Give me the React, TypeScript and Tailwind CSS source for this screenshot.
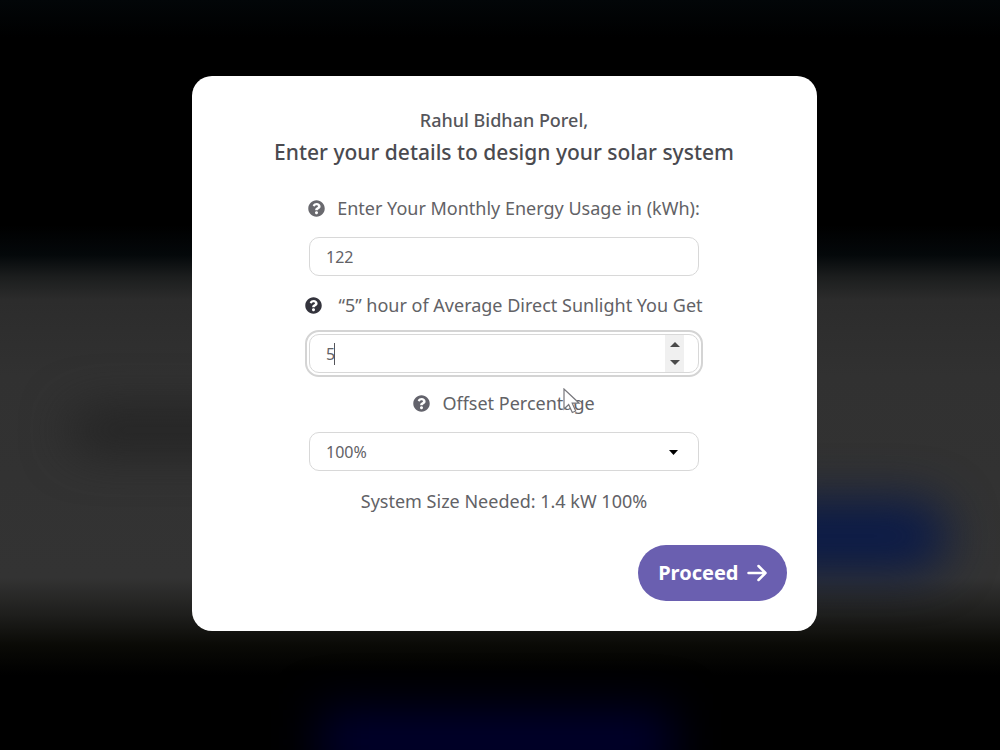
import { useState } from "react";
import type { ReactNode } from "react";
import { FaQuestionCircle } from "react-icons/fa";

function FieldLabel({ htmlFor, iconClass, children }: { htmlFor: string; iconClass: string; children: ReactNode }) {
  return (
    <label htmlFor={htmlFor} className="relative flex items-center text-lg leading-7 text-[#626266]">
      <FaQuestionCircle size={17} className={iconClass} />
      {children}
    </label>
  );
}

export default function App() {
  const [usage, setUsage] = useState("122");
  const [sunlight, setSunlight] = useState(5);
  const [offset, setOffset] = useState("100%");

  return (
    <div className="relative isolate min-h-screen overflow-hidden bg-black font-['Noto_Sans',sans-serif]">
      {/* Blurred page behind the modal */}
      <div className="absolute inset-0 -z-10 bg-[linear-gradient(to_bottom,#020608_0%,#000_5%,#000_30%,#04080a_34%,#1c1e1e_37%,#2c2c2c_40%,#313131_50%,#333_77%,#1e1e1c_82%,#0a0a06_86%,#000_90%)]">
        <div className="absolute top-[410px] left-[70px] h-10 w-60 rounded-full bg-[#222] blur-xl" />
        <div className="absolute top-[500px] left-[740px] h-18 w-52 rounded-full bg-[#0a1a48] blur-xl" />
        <div className="absolute top-[710px] left-[320px] h-16 w-88 bg-[#00002e] blur-xl" />
      </div>

      <div className="flex justify-center pt-19 pr-4 pb-8 pl-6">
        <form
          className="flex w-full max-w-[625px] flex-col items-center rounded-[20px] bg-white px-[30px] py-[30px]"
          onSubmit={(e) => e.preventDefault()}
        >
          <h2 className="text-lg leading-7 font-medium text-[#55555a]">Rahul Bidhan Porel,</h2>
          <h1 className="mb-6 text-[21px] leading-9 font-medium text-[#4a4a4f]">
            Enter your details to design your solar system
          </h1>

          <FieldLabel htmlFor="usage" iconClass="mr-3 text-[#69696e]">
            Enter Your Monthly Energy Usage in (kWh):
          </FieldLabel>
          <input
            id="usage"
            type="text"
            value={usage}
            onChange={(e) => setUsage(e.target.value)}
            className="mt-[15px] mb-[15px] h-[39px] w-full max-w-[390px] rounded-[10px] border border-[#d8d8d8] px-4 text-base text-[#626266]"
          />

          <FieldLabel htmlFor="sunlight" iconClass="mr-4 text-[#33333c]">
            “5” hour of Average Direct Sunlight You Get
          </FieldLabel>
          <div className="relative mt-[15px] mb-4 flex h-[39px] w-full max-w-[390px] rounded-[10px] border border-[#d8d8d8] pr-[14px] pl-4 outline-2 outline-offset-2 outline-[#d4d4d4]">
            <input
              id="sunlight"
              type="number"
              value={sunlight}
              onChange={(e) => setSunlight(Number(e.target.value))}
              className="min-w-0 flex-1 [appearance:textfield] text-base text-[#626266] outline-none [&::-webkit-inner-spin-button]:appearance-none"
            />
            <span className="absolute top-2 left-6 h-[22px] w-px bg-[#55555a]" />
            <div className="flex w-[19px] flex-col bg-[#f0f0f0]">
              <button
                type="button"
                aria-label="Increase"
                onClick={() => setSunlight(sunlight + 1)}
                className="flex flex-1 items-center justify-center"
              >
                <svg width="10" height="5" viewBox="0 0 10 5" fill="#4a4a4a">
                  <path d="M0 5 5 0l5 5z" />
                </svg>
              </button>
              <button
                type="button"
                aria-label="Decrease"
                onClick={() => setSunlight(sunlight - 1)}
                className="flex flex-1 items-center justify-center"
              >
                <svg width="10" height="5" viewBox="0 0 10 5" fill="#4a4a4a">
                  <path d="M0 0h10L5 5z" />
                </svg>
              </button>
            </div>
          </div>

          <FieldLabel htmlFor="offset" iconClass="mr-3 text-[#63636c]">
            Offset Percentage
            {/* Mouse pointer */}
            <svg className="absolute -top-px right-[14px] h-[26px] w-[18px]" viewBox="0 0 18 26" fill="#fff" stroke="#77777c" strokeWidth="1.2">
              <path d="M1 1v20l4.7-4.5 3.6 8 3.4-1.5-3.5-7.8h7z" />
            </svg>
          </FieldLabel>
          <div className="relative mt-[15px] mb-4 w-full max-w-[390px]">
            <select
              id="offset"
              value={offset}
              onChange={(e) => setOffset(e.target.value)}
              className="h-[39px] w-full appearance-none rounded-[10px] border border-[#d8d8d8] px-4 text-base text-[#626266]"
            >
              <option>100%</option>
              <option>75%</option>
              <option>50%</option>
            </select>
            <svg className="pointer-events-none absolute top-[18px] right-[21px]" width="9" height="5" viewBox="0 0 9 5">
              <path d="M0 0h9L4.5 5z" />
            </svg>
          </div>

          <p className="text-lg leading-7 text-[#626266]">System Size Needed: 1.4 kW {offset}</p>

          <button
            type="submit"
            className="mt-[30px] flex h-14 items-center gap-2 self-end rounded-full bg-[#6a5fb0] px-5 text-xl font-bold text-white"
          >
            Proceed
            <svg
              width="20"
              height="18"
              viewBox="0 0 20 18"
              fill="none"
              stroke="currentColor"
              strokeWidth="2.5"
              strokeLinecap="round"
              strokeLinejoin="round"
            >
              <path d="M1.5 9h17M11.5 2l7 7-7 7" />
            </svg>
          </button>
        </form>
      </div>
    </div>
  );
}
